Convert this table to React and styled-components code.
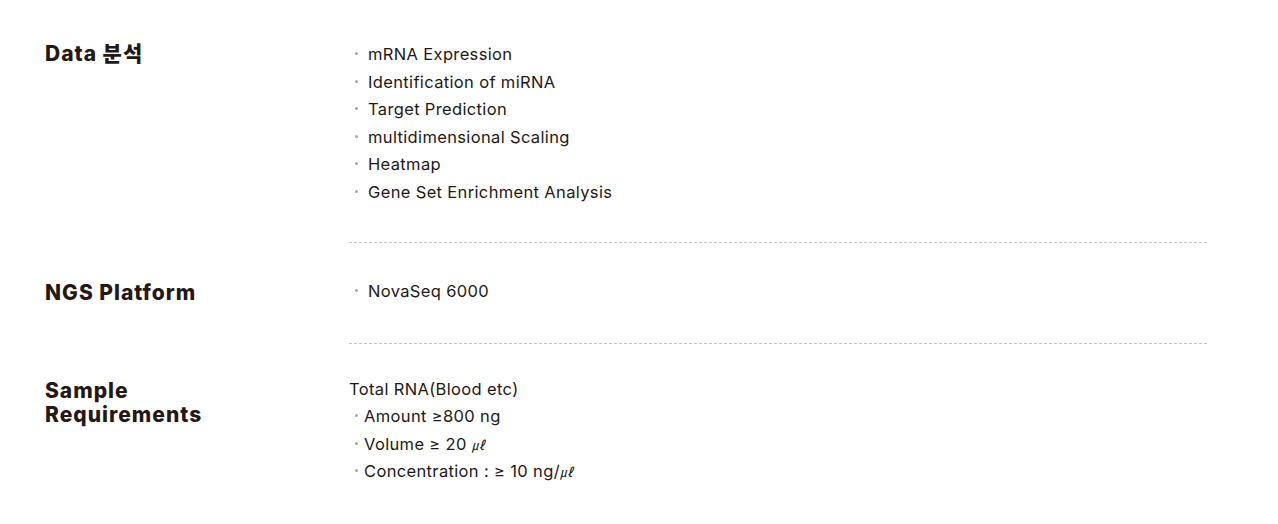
import React from 'react'
import styled, { createGlobalStyle } from 'styled-components'

const Global = createGlobalStyle`
  body {
    margin: 0;
    background: #ffffff;
    font-family: 'Inter', 'Noto Sans CJK KR', sans-serif;
    color: #231815;
  }
`

const Wrapper = styled.div`
  width: 1278px;
  height: 524px;
  box-sizing: border-box;
  padding: 41px 71px 0 45px;
`

const Row = styled.div`
  display: grid;
  grid-template-columns: 304px 1fr;
`

const Title = styled.h3`
  margin: 0;
  padding-top: ${p => p.top || '0px'};
  font-size: 21px;
  font-weight: 800;
  line-height: 24px;
  letter-spacing: 1px;
  color: #231815;
`

const Body = styled.div`
  padding: ${p => p.pad || '0 0 36px'};
  border-bottom: ${p => (p.last ? 'none' : '1px dashed #c4c4c4')};
`

const List = styled.ul`
  list-style: none;
  margin: 0;
  padding: 0;
`

const Item = styled.li`
  position: relative;
  padding-left: ${p => p.indent || '19px'};
  font-size: 16.5px;
  line-height: 27.5px;
  letter-spacing: 0.35px;
  color: #231815;
  &::before {
    content: '';
    position: absolute;
    left: ${p => p.dot || '6px'};
    top: 11px;
    width: 3px;
    height: 3px;
    border-radius: 50%;
    background: #a6a6a6;
  }
`

const Lead = styled.p`
  margin: 0;
  font-size: 16.5px;
  line-height: 27.5px;
  letter-spacing: 0.35px;
  color: #231815;
`

const Unit = styled.span`
  font-family: 'Noto Sans CJK KR', sans-serif;
  font-size: 13px;
  font-style: italic;
`

const analysis = [
  'mRNA Expression',
  'Identification of miRNA',
  'Target Prediction',
  'multidimensional Scaling',
  'Heatmap',
  'Gene Set Enrichment Analysis',
]

export default function App() {
  return (
    <Wrapper>
      <Global />
      <Row>
        <Title top="1px">Data 분석</Title>
        <Body>
          <List>
            {analysis.map(t => (
              <Item key={t}>{t}</Item>
            ))}
          </List>
        </Body>
      </Row>
      <Row>
        <Title top="38px">NGS Platform</Title>
        <Body pad="35px 0 37px">
          <List>
            <Item>NovaSeq 6000</Item>
          </List>
        </Body>
      </Row>
      <Row>
        <Title top="35px">Sample<br />Requirements</Title>
        <Body pad="32px 0 0" last>
          <Lead>Total RNA(Blood etc)</Lead>
          <List>
            <Item indent="15px" dot="6px">Amount ≥800 ng</Item>
            <Item indent="15px" dot="6px">Volume ≥ 20 <Unit>㎕</Unit></Item>
            <Item indent="15px" dot="6px">Concentration : ≥ 10 ng/<Unit>㎕</Unit></Item>
          </List>
        </Body>
      </Row>
    </Wrapper>
  )
}
